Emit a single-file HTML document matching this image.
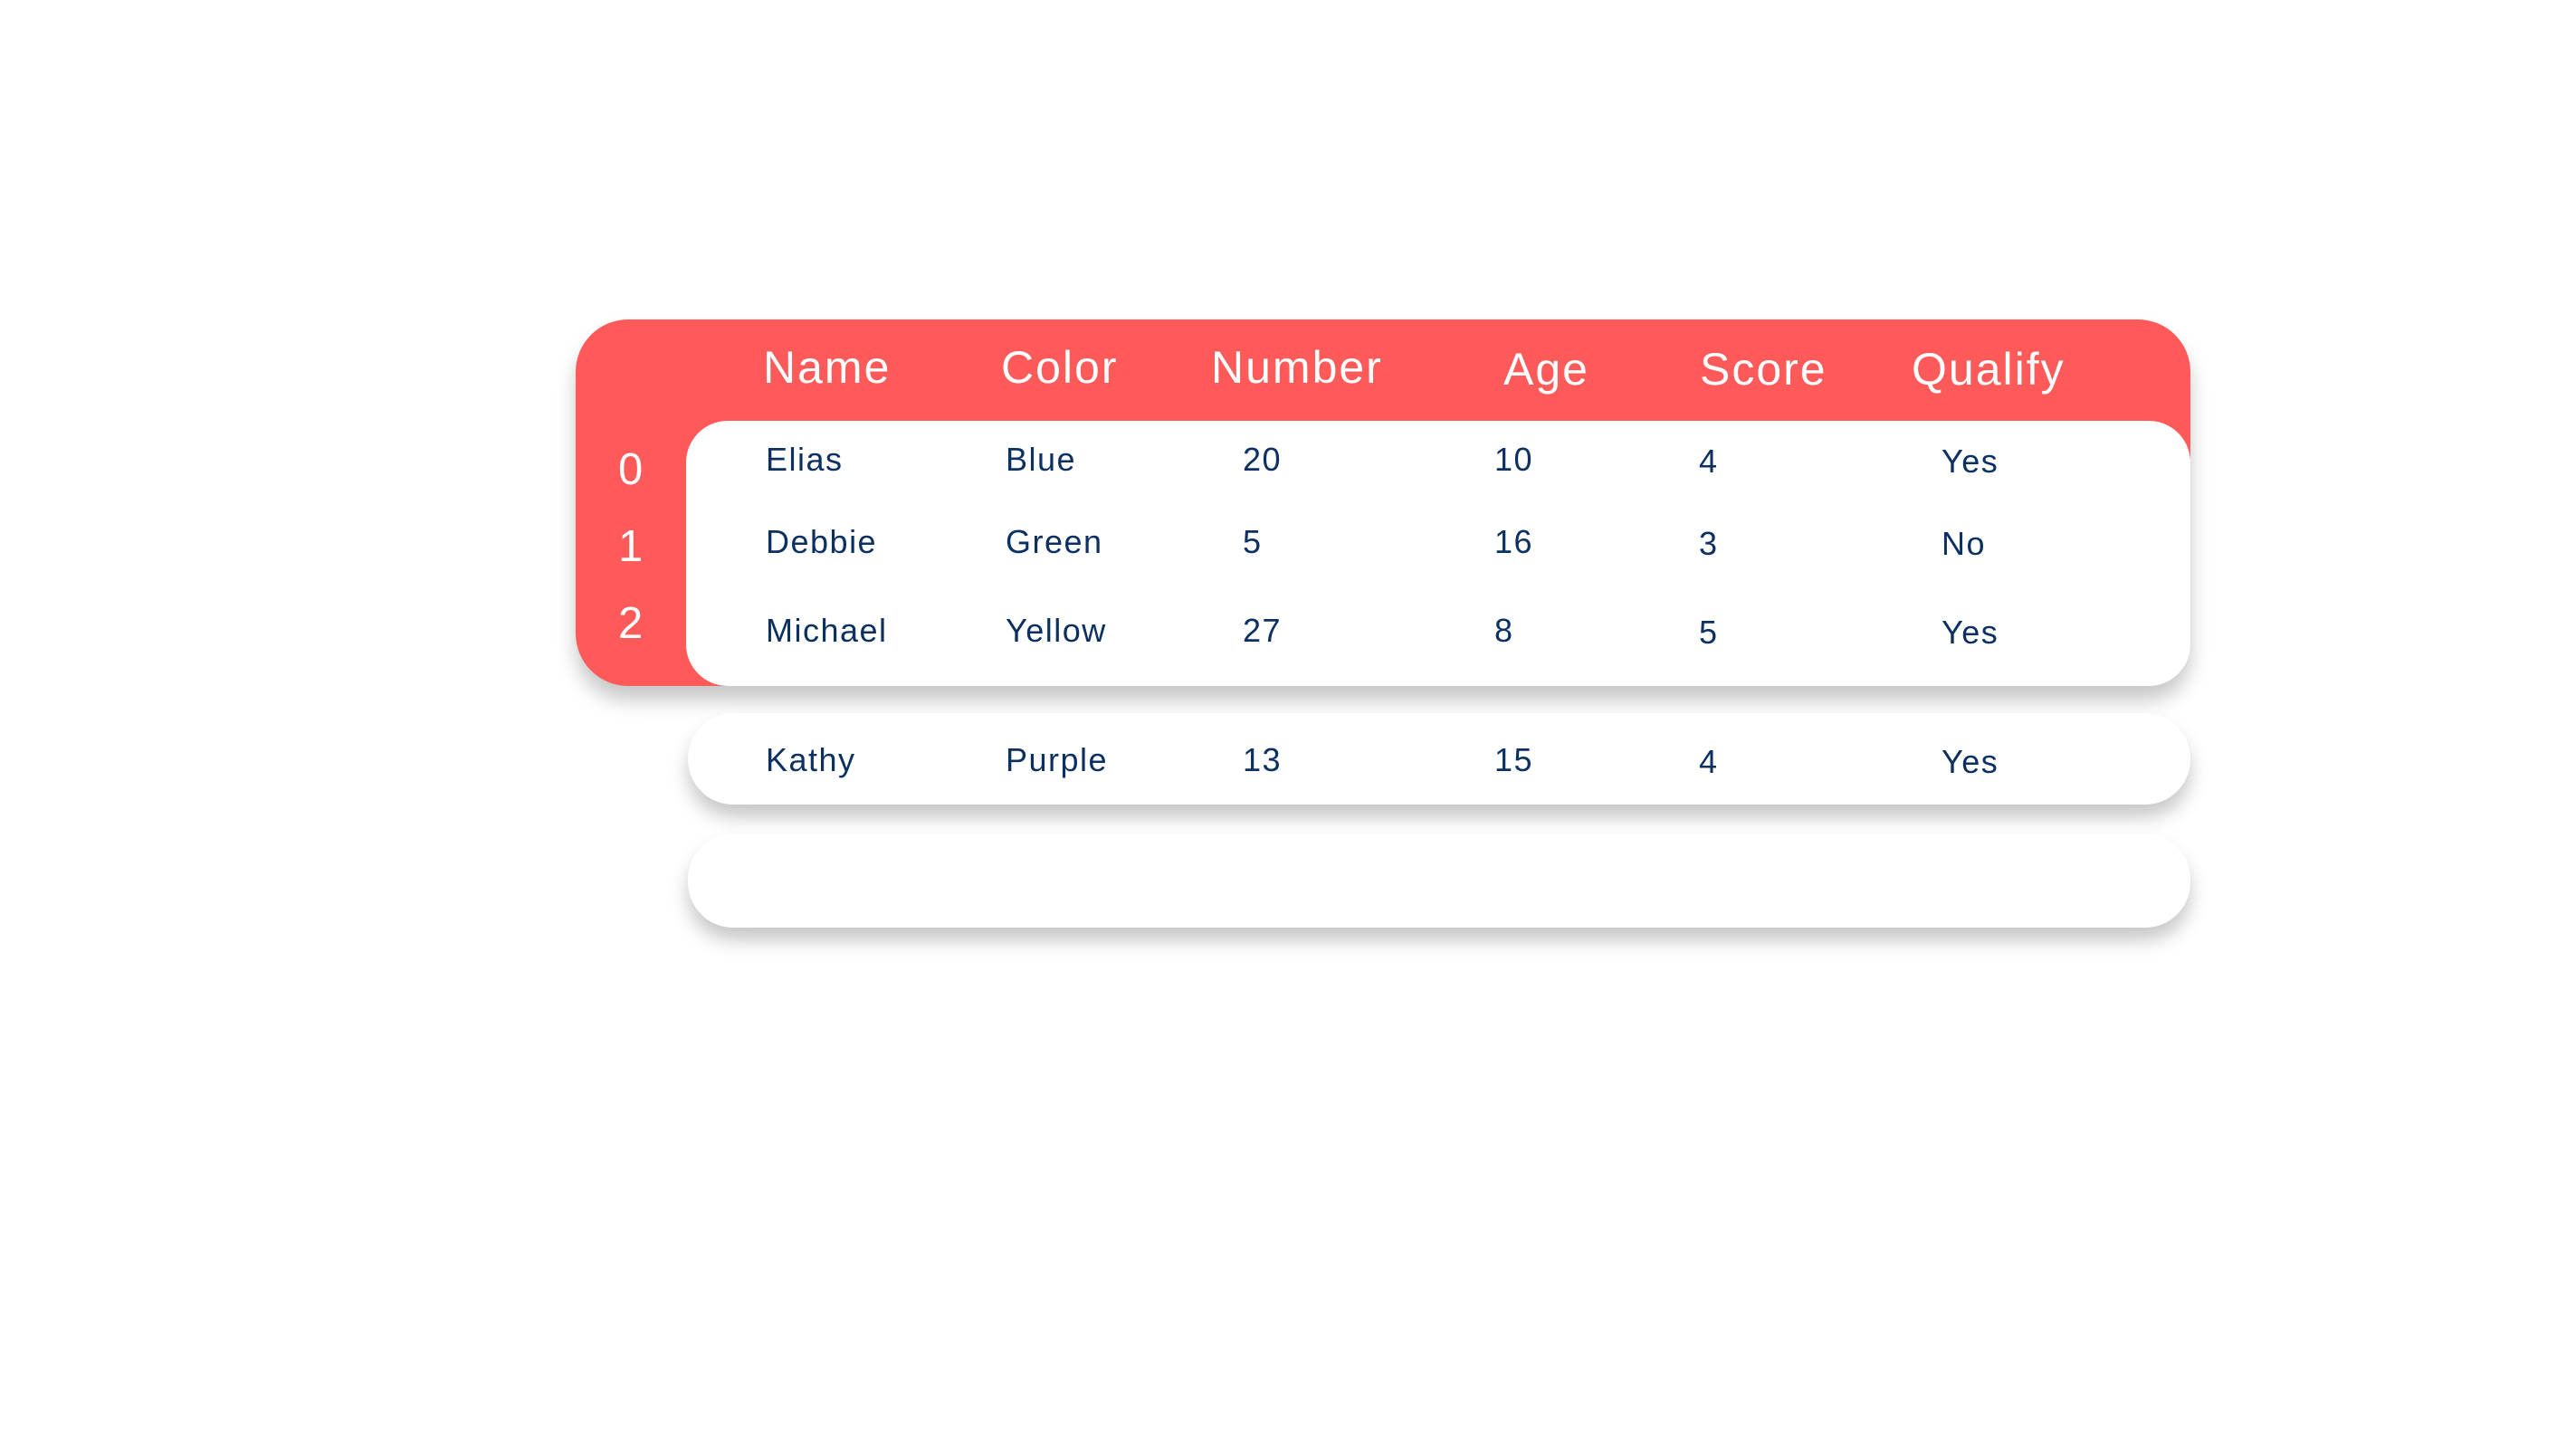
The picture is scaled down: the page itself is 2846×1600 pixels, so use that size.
<!DOCTYPE html>
<html><head><meta charset="utf-8"><style>
html,body{margin:0;padding:0;background:#fff;}
body{width:2846px;height:1600px;position:relative;overflow:hidden;font-family:"Liberation Sans",sans-serif;}
.red{position:absolute;left:636px;top:353px;width:1784px;height:405px;background:#FF5A5A;border-radius:58px 58px 48px 58px;box-shadow:0 16px 22px rgba(0,0,0,0.22);}
.white{position:absolute;left:758px;top:465px;width:1662px;height:293px;background:#fff;border-radius:46px;}
.row{position:absolute;left:760px;width:1660px;background:#fff;border-radius:50px;box-shadow:0 14px 20px rgba(0,0,0,0.22);}
.t{position:absolute;white-space:nowrap;line-height:1;}
.h{color:#fff;font-size:50px;top:381px;letter-spacing:2px;}
.i{color:#fff;font-size:49px;}
.b{color:#0b3061;font-size:36px;letter-spacing:1.5px;}
</style></head><body>
<div class="red"></div>
<div class="white"></div>
<div class="row" style="top:788px;height:101px"></div>
<div class="row" style="top:921px;height:104px"></div>

<div class="t h" style="left:843px">Name</div>
<div class="t h" style="left:1106px">Color</div>
<div class="t h" style="left:1338px">Number</div>
<div class="t h" style="left:1661px;top:383px">Age</div>
<div class="t h" style="left:1878px;top:383px">Score</div>
<div class="t h" style="left:2112px;top:383px">Qualify</div>

<div class="t i" style="left:683px;top:495px">0</div>
<div class="t i" style="left:683px;top:580px">1</div>
<div class="t i" style="left:683px;top:665px">2</div>

<div class="t b" style="left:846px;top:490px">Elias</div>
<div class="t b" style="left:1111px;top:490px">Blue</div>
<div class="t b" style="left:1373px;top:490px">20</div>
<div class="t b" style="left:1651px;top:490px">10</div>
<div class="t b" style="left:1877px;top:492px">4</div>
<div class="t b" style="left:2145px;top:492px">Yes</div>

<div class="t b" style="left:846px;top:581px">Debbie</div>
<div class="t b" style="left:1111px;top:581px">Green</div>
<div class="t b" style="left:1373px;top:581px">5</div>
<div class="t b" style="left:1651px;top:581px">16</div>
<div class="t b" style="left:1877px;top:583px">3</div>
<div class="t b" style="left:2145px;top:583px">No</div>

<div class="t b" style="left:846px;top:679px">Michael</div>
<div class="t b" style="left:1111px;top:679px">Yellow</div>
<div class="t b" style="left:1373px;top:679px">27</div>
<div class="t b" style="left:1651px;top:679px">8</div>
<div class="t b" style="left:1877px;top:681px">5</div>
<div class="t b" style="left:2145px;top:681px">Yes</div>

<div class="t b" style="left:846px;top:822px">Kathy</div>
<div class="t b" style="left:1111px;top:822px">Purple</div>
<div class="t b" style="left:1373px;top:822px">13</div>
<div class="t b" style="left:1651px;top:822px">15</div>
<div class="t b" style="left:1877px;top:824px">4</div>
<div class="t b" style="left:2145px;top:824px">Yes</div>
</body></html>
